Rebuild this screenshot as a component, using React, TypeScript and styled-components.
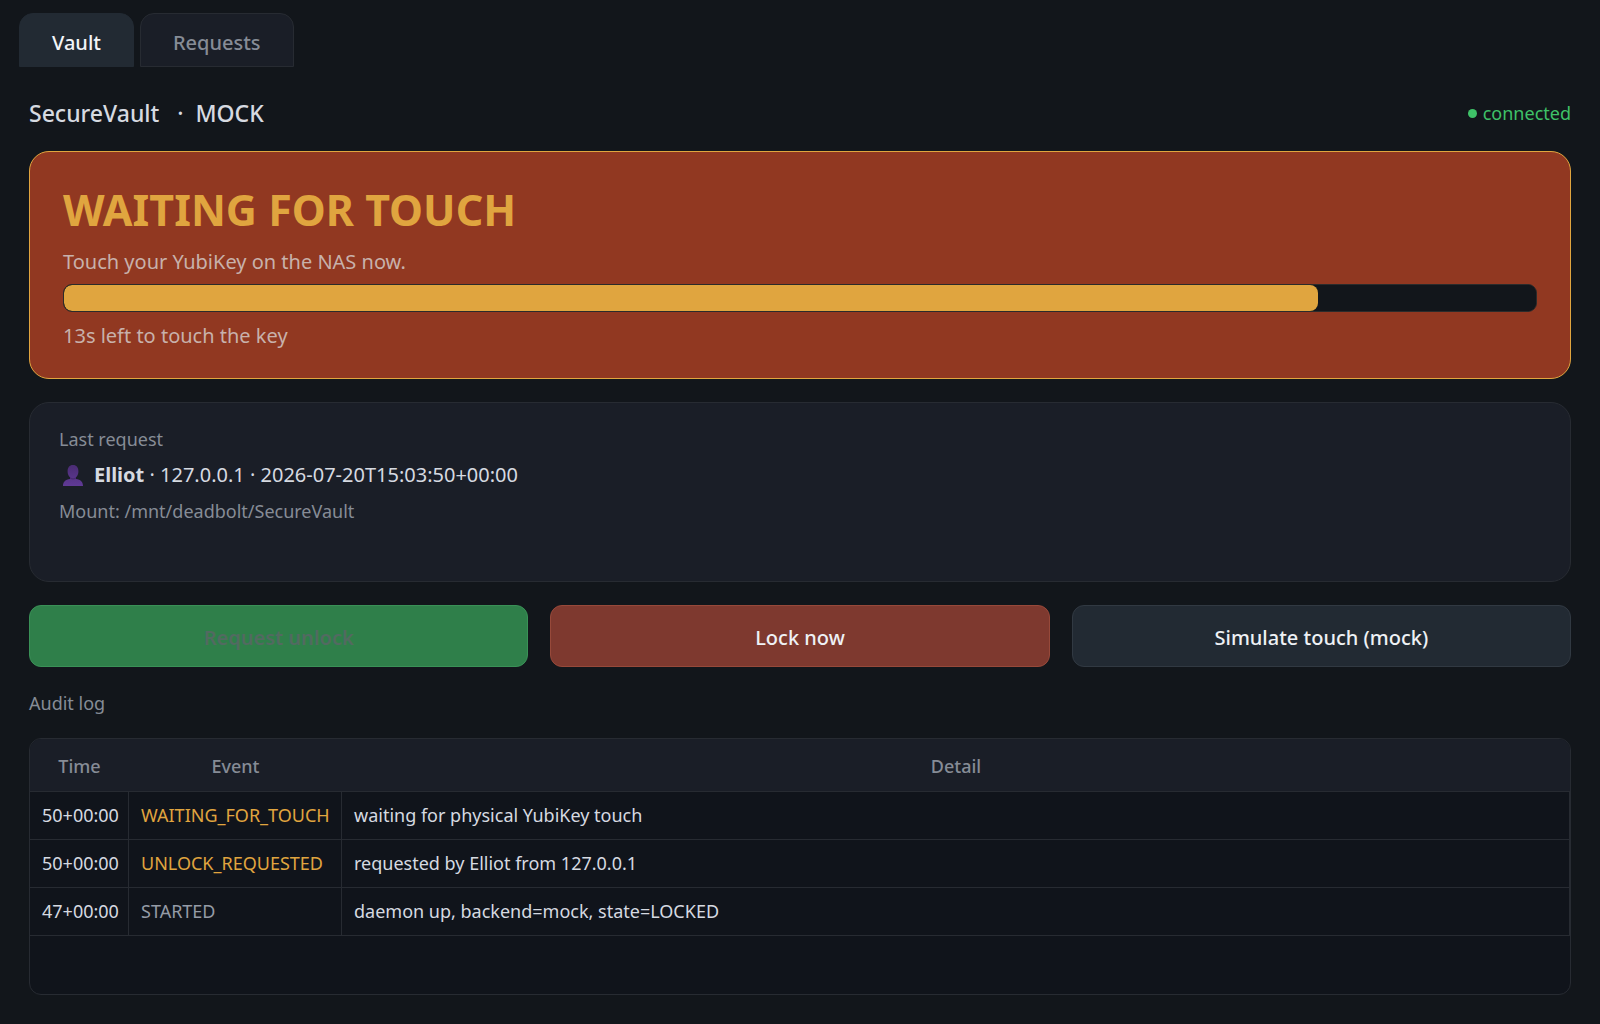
import React, { useState } from "react";
import styled, { createGlobalStyle } from "styled-components";

const color = {
  page: "#12161b",
  surface: "#1a1e27",
  raised: "#222a33",
  well: "#10141b",
  line: "#272b32",
  text: "#d6dae1",
  muted: "#868c96",
  amber: "#e0a53f",
  green: "#3fc268",
};

const GlobalStyle = createGlobalStyle`
  *, *::before, *::after { box-sizing: border-box; }
  body {
    margin: 0;
    background: ${color.page};
    color: ${color.text};
    font-family: "Noto Sans", "Open Sans", sans-serif;
    font-size: 20px;
    line-height: 28px;
  }
  button { font: inherit; }
`;

const Window = styled.div`
  min-height: 100vh;
  display: flex;
  flex-direction: column;
  padding: 13px 0 29px;
`;

const TabBar = styled.div`
  display: flex;
  gap: 6px;
  padding: 0 19px;
`;

const Tab = styled.button<{ $active: boolean }>`
  padding: 15px 32px 9px;
  border: 1px solid ${(p) => (p.$active ? color.raised : color.line)};
  border-radius: 14px 14px 0 0;
  background: ${(p) => (p.$active ? color.raised : color.surface)};
  color: ${(p) => (p.$active ? "#f2f5f9" : color.muted)};
  font-weight: 500;
`;

const Panel = styled.main`
  flex: 1;
  display: flex;
  flex-direction: column;
  gap: 23px;
  padding: 31px 29px 0;
`;

const Header = styled.header`
  display: flex;
  align-items: center;
  justify-content: space-between;
`;

const Title = styled.h1`
  margin: 0;
  font-size: 23px;
  line-height: 30px;
  font-weight: 500;
  white-space: pre;
`;

const Connection = styled.span`
  display: flex;
  align-items: center;
  gap: 6px;
  color: ${color.green};
  font-size: 18px;
`;

const Dot = styled.span`
  width: 9px;
  height: 9px;
  border-radius: 50%;
  background: currentColor;
`;

const Banner = styled.section`
  display: flex;
  flex-direction: column;
  gap: 8px;
  padding: 28px 33px 26px;
  border: 1px solid ${color.amber};
  border-radius: 20px;
  background: #913821;
  color: #c8b1ab;
`;

const State = styled.h2`
  margin: 0;
  color: ${color.amber};
  font-size: 43px;
  line-height: 60px;
  font-weight: 700;
`;

const Hint = styled.p`
  margin: 0;
`;

const Countdown = styled.label`
  line-height: 32px;
`;

const Progress = styled.progress`
  appearance: none;
  display: block;
  width: 100%;
  height: 28px;
  border: 1px solid #2b2b2b;
  border-radius: 9px;
  background: ${color.page};
  overflow: hidden;

  &::-webkit-progress-bar {
    background: ${color.page};
    border-radius: 8px;
  }
  &::-webkit-progress-value {
    background: ${color.amber};
    border-radius: 8px;
  }
`;

const Card = styled.section`
  display: flex;
  flex-direction: column;
  gap: 9px;
  min-height: 180px;
  padding: 23px 29px;
  border: 1px solid ${color.line};
  border-radius: 20px;
  background: ${color.surface};
`;

const Caption = styled.p`
  margin: 0;
  color: ${color.muted};
  font-size: 18px;
  line-height: 26px;
`;

const Requester = styled.p`
  display: flex;
  align-items: center;
  gap: 11px;
  margin: 0;
  padding-left: 4px;
`;

const Actions = styled.div`
  display: grid;
  grid-template-columns: repeat(3, 1fr);
  gap: 22px;
`;

const tones = {
  green: ["#2f7f4a", "#3a9157"],
  red: ["#7e392f", "#97493a"],
  neutral: [color.raised, "#313942"],
};

const Action = styled.button<{ $tone: keyof typeof tones }>`
  padding: 18px 20px 14px;
  border: 1px solid ${(p) => tones[p.$tone][1]};
  border-radius: 12px;
  background: ${(p) => tones[p.$tone][0]};
  color: #eef1f5;
  font-weight: 500;

  &:disabled {
    color: #526a61;
    font-weight: 600;
  }
`;

const LogTitle = styled.h3`
  margin: 0;
  padding-top: 1px;
  color: ${color.muted};
  font-size: 18px;
  line-height: 24px;
  font-weight: 400;
`;

const LogFrame = styled.div`
  flex: 1;
  border: 1px solid ${color.line};
  border-radius: 12px;
  background: ${color.well};
  overflow: hidden;
`;

const Log = styled.table`
  width: 100%;
  table-layout: fixed;
  border-spacing: 0;
  font-size: 18px;
  line-height: 27px;
`;

const HeadCell = styled.th<{ $width?: number }>`
  width: ${(p) => (p.$width ? `${p.$width}px` : "auto")};
  padding: 14px 0 11px;
  border-bottom: 1px solid ${color.line};
  background: ${color.surface};
  color: ${color.muted};
  font-weight: 500;
  text-align: center;
`;

const Cell = styled.td<{ $color?: string }>`
  padding: 10px 0 10px 12px;
  border-right: 1px solid ${color.line};
  border-bottom: 1px solid ${color.line};
  color: ${(p) => p.$color ?? color.text};
  white-space: nowrap;
`;

const UserIcon = () => (
  <svg width="20" height="21" viewBox="0 0 20 21" aria-hidden="true">
    <defs>
      <linearGradient id="bust" x1="0" y1="0" x2="0" y2="1">
        <stop offset="0" stopColor="#4a2c73" />
        <stop offset="1" stopColor="#603a96" />
      </linearGradient>
    </defs>
    <path
      fill="url(#bust)"
      d="M0 21c0-4.200 2.400-6.400 7-7v-1.800C5.500 11 4.600 9.100 4.600 6.500 4.600 2.400 6.400 0 10 0s5.400 2.400 5.400 6.500c0 2.600-.9 4.500-2.400 5.700V14c4.600.6 7 2.800 7 7z"
    />
    <path fill="#3d2361" opacity="0.6" d="M7 12.200c1.800 1.300 4.200 1.300 6 0v1.600c-1.800 1-4.200 1-6 0z" />
  </svg>
);

const entries = [
  { time: "50+00:00", event: "WAITING_FOR_TOUCH", tone: color.amber, detail: "waiting for physical YubiKey touch" },
  { time: "50+00:00", event: "UNLOCK_REQUESTED", tone: color.amber, detail: "requested by Elliot from 127.0.0.1" },
  { time: "47+00:00", event: "STARTED", tone: "#959ba6", detail: "daemon up, backend=mock, state=LOCKED" },
];

export default function App() {
  const [tab, setTab] = useState("Vault");

  return (
    <>
      <GlobalStyle />
      <Window>
        <TabBar role="tablist">
          {["Vault", "Requests"].map((name) => (
            <Tab
              key={name}
              type="button"
              role="tab"
              aria-selected={tab === name}
              $active={tab === name}
              onClick={() => setTab(name)}
            >
              {name}
            </Tab>
          ))}
        </TabBar>

        <Panel>
          <Header>
            <Title>{"SecureVault   ·  MOCK"}</Title>
            <Connection>
              <Dot />
              connected
            </Connection>
          </Header>

          <Banner>
            <State>WAITING FOR TOUCH</State>
            <Hint>Touch your YubiKey on the NAS now.</Hint>
            <Progress id="countdown" value={852} max={1000} />
            <Countdown htmlFor="countdown">13s left to touch the key</Countdown>
          </Banner>

          <Card>
            <Caption>Last request</Caption>
            <Requester>
              <UserIcon />
              <span>
                <strong>Elliot</strong> · 127.0.0.1 · 2026-07-20T15:03:50+00:00
              </span>
            </Requester>
            <Caption>Mount: /mnt/deadbolt/SecureVault</Caption>
          </Card>

          <Actions>
            <Action type="button" $tone="green" disabled>
              Request unlock
            </Action>
            <Action type="button" $tone="red">
              Lock now
            </Action>
            <Action type="button" $tone="neutral">
              Simulate touch (mock)
            </Action>
          </Actions>

          <LogTitle>Audit log</LogTitle>
          <LogFrame>
            <Log>
              <thead>
                <tr>
                  <HeadCell $width={99}>Time</HeadCell>
                  <HeadCell $width={213}>Event</HeadCell>
                  <HeadCell>Detail</HeadCell>
                </tr>
              </thead>
              <tbody>
                {entries.map((entry) => (
                  <tr key={entry.event}>
                    <Cell>{entry.time}</Cell>
                    <Cell $color={entry.tone}>{entry.event}</Cell>
                    <Cell>{entry.detail}</Cell>
                  </tr>
                ))}
              </tbody>
            </Log>
          </LogFrame>
        </Panel>
      </Window>
    </>
  );
}
